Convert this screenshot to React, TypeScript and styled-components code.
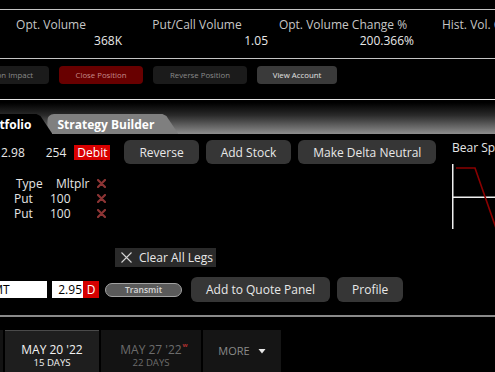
import React from 'react';
import styled, { createGlobalStyle } from 'styled-components';

const GlobalStyle = createGlobalStyle`
  html, body {
    margin: 0;
    padding: 0;
    background: #000;
  }
  body {
    font-family: 'Open Sans', 'DejaVu Sans', sans-serif;
    color: #e6e6e6;
    overflow: hidden;
  }
`;

const Screen = styled.div`
  width: 495px;
  height: 372px;
  overflow: hidden;
  background: #000;
  display: flex;
  flex-direction: column;

  & > * {
    flex-shrink: 0;
  }
`;

const Rule = styled.div<{ $color: string; $top: number; $size?: number }>`
  height: ${(p) => p.$size || 1}px;
  margin-top: ${(p) => p.$top}px;
  background: ${(p) => p.$color};
`;

/* ---------- stats strip ---------- */

const Stats = styled.div`
  display: grid;
  grid-template-columns: repeat(4, 146px);
  margin-left: -22px;
  padding-top: 7px;
  font-size: 12px;
  line-height: 15px;
  white-space: nowrap;
`;

const Stat = styled.div`
  display: flex;
  flex-direction: column;
  gap: 1px;
`;

const StatLabel = styled.div`
  text-align: center;
  color: #c6c6c6;
`;

const StatValue = styled.div`
  text-align: right;
  padding-right: 2px;
  color: #e8e8e8;
`;

/* ---------- small action buttons ---------- */

const ActionBar = styled.div`
  display: flex;
  gap: 10px;
  margin-top: 7px;
  margin-left: -39px;
`;

const SmallButton = styled.div<{ $w: number; $variant: 'dim' | 'danger' | 'normal' }>`
  flex-shrink: 0;
  width: ${(p) => p.$w}px;
  height: 18px;
  border-radius: 4px;
  display: flex;
  align-items: center;
  justify-content: center;
  font-size: 7.8px;
  white-space: nowrap;
  background: ${(p) => (p.$variant === 'danger' ? '#680000' : p.$variant === 'normal' ? '#3a3a3a' : '#1b1b1b')};
  color: ${(p) => (p.$variant === 'danger' ? '#c58a8a' : p.$variant === 'normal' ? '#e2e2e2' : '#8a8a8a')};
`;

/* ---------- tabs ---------- */

const TabBar = styled.div`
  height: 34px;
  display: flex;
  align-items: flex-end;
  background: linear-gradient(to bottom, #000 8%, #2a2a2a 45%, #8e8e8e 100%);
  overflow: hidden;
`;

const TabTrack = styled.div`
  display: flex;
  margin-left: -40px;
`;

const Tab = styled.div<{ $active?: boolean }>`
  position: relative;
  z-index: ${(p) => (p.$active ? 2 : 1)};
  height: 20px;
  line-height: 21px;
  padding: ${(p) => (p.$active ? '0 21px 0 19px' : '0 24px 0 10px')};
  margin-left: ${(p) => (p.$active ? 0 : -5)}px;
  background: ${(p) => (p.$active ? '#000' : '#7f7f7f')};
  border-top-left-radius: 7px;
  clip-path: polygon(0 0, calc(100% - 16px) 0, calc(100% - 12px) 2px, 100% 100%, 0 100%);
  color: #fff;
  font-weight: 700;
  font-size: 12px;
  white-space: nowrap;
`;

/* ---------- main builder area ---------- */

const Builder = styled.div`
  display: grid;
  grid-template-columns: 452px 1fr;
`;

const LeftPanel = styled.div`
  display: flex;
  flex-direction: column;
`;

const SummaryRow = styled.div`
  display: flex;
  align-items: center;
  height: 24px;
  margin-top: 6px;
  font-size: 12px;
  white-space: nowrap;
`;

const Figure = styled.span<{ $gap?: number }>`
  margin-left: ${(p) => p.$gap || 0}px;
  color: #e8e8e8;
`;

const DebitTag = styled.span`
  margin-left: 8px;
  height: 15px;
  line-height: 15px;
  padding: 0 3px;
  background: #d90000;
  color: #fff;
`;

const ButtonGroup = styled.div<{ $gap: number }>`
  display: flex;
  gap: 7px;
  margin-left: ${(p) => p.$gap}px;
`;

const Button = styled.div<{ $h?: number }>`
  height: ${(p) => p.$h || 24}px;
  padding: 0 15px;
  display: flex;
  align-items: center;
  border-radius: 6px;
  background: #363636;
  color: #e8e8e8;
  font-size: 12px;
  white-space: nowrap;
`;

const LegsTable = styled.div`
  display: grid;
  grid-template-columns: 14px 36px 47px 12px;
  grid-auto-rows: 15px;
  margin-top: 12px;
  font-size: 12px;
  line-height: 15px;
  color: #e6e6e6;
  white-space: nowrap;
`;

const Cell = styled.div<{ $indent?: number }>`
  padding-left: ${(p) => p.$indent || 0}px;
  display: flex;
  align-items: center;
`;

const ClearButton = styled.div`
  align-self: flex-start;
  margin-top: 27px;
  margin-left: 115px;
  height: 19px;
  display: flex;
  align-items: center;
  gap: 7px;
  padding: 0 3px 0 6px;
  background: #2a2a2a;
  color: #e8e8e8;
  font-size: 12px;
  white-space: nowrap;
`;

const OrderRow = styled.div`
  display: flex;
  align-items: center;
  height: 25px;
  margin-top: 10px;
  margin-left: -40px;
  white-space: nowrap;
`;

const Field = styled.div<{ $w: number; $align?: 'left' | 'right' }>`
  width: ${(p) => p.$w}px;
  height: 17px;
  box-sizing: border-box;
  padding: ${(p) => (p.$align === 'right' ? '0 1px 0 0' : '0 0 0 26px')};
  background: #fff;
  color: #000;
  font-size: 12px;
  line-height: 17px;
  text-align: ${(p) => p.$align || 'left'};
`;

const PriceGroup = styled.div`
  display: flex;
  margin-left: 5px;
`;

const SideFlag = styled.div`
  width: 16px;
  height: 17px;
  line-height: 17px;
  text-align: center;
  background: #d40000;
  color: #fff;
  font-size: 12px;
`;

const TransmitPill = styled.div`
  margin-left: 6px;
  width: 77px;
  height: 14px;
  box-sizing: border-box;
  border: 1.5px solid #a2a2a2;
  border-radius: 8px;
  background: #5a5a5a;
  color: #d8d8d8;
  font-size: 8.6px;
  font-weight: 600;
  display: flex;
  align-items: center;
  justify-content: center;
`;

const OrderButtons = styled.div`
  display: flex;
  gap: 7px;
  margin-left: 9px;
`;

/* ---------- chart ---------- */

const ChartPanel = styled.div`
  display: flex;
  flex-direction: column;
  white-space: nowrap;
`;

const ChartTitle = styled.div`
  margin-top: 6px;
  font-size: 12px;
  line-height: 16px;
  color: #e6e6e6;
`;

const ChartBox = styled.svg`
  margin-top: 8px;
  overflow: visible;
`;

/* ---------- expiry tabs ---------- */

const ExpiryBar = styled.div`
  display: flex;
  gap: 2px;
  margin-top: 13px;
  margin-left: -91px;
`;

const ExpiryTab = styled.div<{ $active?: boolean; $w: number }>`
  flex-shrink: 0;
  width: ${(p) => p.$w}px;
  height: 50px;
  box-sizing: border-box;
  padding-top: 12px;
  display: flex;
  flex-direction: column;
  align-items: center;
  background: ${(p) => (p.$active ? '#1e1e1e' : '#131313')};
  border-top: 1px solid ${(p) => (p.$active ? '#4a4a4a' : '#131313')};
  color: ${(p) => (p.$active ? '#f2f2f2' : '#6c6c6c')};
  white-space: nowrap;
`;

const ExpiryDate = styled.div`
  position: relative;
  font-size: 12px;
  line-height: 14px;
`;

const Weekly = styled.span`
  position: absolute;
  top: -1px;
  right: -6px;
  font-size: 6px;
  line-height: 6px;
  font-weight: 700;
  color: #b03030;
`;

const ExpiryDays = styled.div`
  font-size: 9.6px;
  line-height: 11px;
`;

const MoreTab = styled.div`
  flex-shrink: 0;
  width: 78px;
  height: 50px;
  box-sizing: border-box;
  padding-top: 14px;
  display: flex;
  justify-content: center;
  gap: 8px;
  background: #151515;
  color: #8a8a8a;
  font-size: 11px;
  line-height: 14px;
`;

const RemoveMark = () => (
  <svg width="9" height="9" viewBox="0 0 9 9">
    <path d="M1 1 L8 8 M8 1 L1 8" stroke="#8c3434" strokeWidth="2.2" strokeLinecap="round" />
  </svg>
);

const legs = [
  { type: 'Put', mult: '100' },
  { type: 'Put', mult: '100' },
];

export default function App() {
  return (
    <Screen>
      <GlobalStyle />
      <Rule $color="#c4c4c4" $top={9} />
      <Stats>
        <Stat>
          <StatLabel>Opt. Volume</StatLabel>
          <StatValue>368K</StatValue>
        </Stat>
        <Stat>
          <StatLabel>Put/Call Volume</StatLabel>
          <StatValue>1.05</StatValue>
        </Stat>
        <Stat>
          <StatLabel>Opt. Volume Change %</StatLabel>
          <StatValue>200.366%</StatValue>
        </Stat>
        <Stat>
          <StatLabel>Hist. Vol. Change</StatLabel>
          <StatValue>&nbsp;</StatValue>
        </Stat>
      </Stats>
      <Rule $color="#c4c4c4" $top={10} />

      <ActionBar>
        <SmallButton $w={88} $variant="dim">Position Impact</SmallButton>
        <SmallButton $w={84} $variant="danger">Close Position</SmallButton>
        <SmallButton $w={94} $variant="dim">Reverse Position</SmallButton>
        <SmallButton $w={80} $variant="normal">View Account</SmallButton>
      </ActionBar>

      <Rule $color="#e4e4e4" $top={15} />
      <TabBar>
        <TabTrack>
          <Tab $active>Portfolio</Tab>
          <Tab>Strategy Builder</Tab>
        </TabTrack>
      </TabBar>

      <Builder>
        <LeftPanel>
          <SummaryRow>
            <Figure $gap={1}>2.98</Figure>
            <Figure $gap={21}>254</Figure>
            <DebitTag>Debit</DebitTag>
            <ButtonGroup $gap={14}>
              <Button>Reverse</Button>
              <Button>Add Stock</Button>
              <Button>Make Delta Neutral</Button>
            </ButtonGroup>
          </SummaryRow>

          <LegsTable>
            <Cell />
            <Cell $indent={2}>Type</Cell>
            <Cell $indent={6}>Mltplr</Cell>
            <Cell><RemoveMark /></Cell>
            {legs.map((leg, i) => (
              <React.Fragment key={i}>
                <Cell />
                <Cell>{leg.type}</Cell>
                <Cell>{leg.mult}</Cell>
                <Cell><RemoveMark /></Cell>
              </React.Fragment>
            ))}
          </LegsTable>

          <ClearButton>
            <svg width="11" height="11" viewBox="0 0 11 11">
              <path d="M0.5 0.5 L10.5 10.5 M10.5 0.5 L0.5 10.5" stroke="#d6d6d6" strokeWidth="1.1" />
            </svg>
            Clear All Legs
          </ClearButton>

          <OrderRow>
            <Field $w={87}>LMT</Field>
            <PriceGroup>
              <Field $w={31} $align="right">2.95</Field>
              <SideFlag>D</SideFlag>
            </PriceGroup>
            <TransmitPill>Transmit</TransmitPill>
            <OrderButtons>
              <Button $h={25}>Add to Quote Panel</Button>
              <Button $h={25}>Profile</Button>
            </OrderButtons>
          </OrderRow>
        </LeftPanel>

        <ChartPanel>
          <ChartTitle>Bear Spread</ChartTitle>
          <ChartBox width="43" height="66" viewBox="0 0 43 66">
            <path d="M0.75 0 V65" stroke="#f0f0f0" strokeWidth="1.5" />
            <path d="M0 33.25 H60" stroke="#f0f0f0" strokeWidth="1.5" />
            <path d="M4 4 H23 L45 67" stroke="#8a0000" strokeWidth="1.6" fill="none" />
          </ChartBox>
        </ChartPanel>
      </Builder>

      <Rule $color="#8a8a8a" $top={13} $size={2} />

      <ExpiryBar>
        <ExpiryTab $w={94}>
          <ExpiryDate>MAY 13 '22</ExpiryDate>
          <ExpiryDays>8 DAYS</ExpiryDays>
        </ExpiryTab>
        <ExpiryTab $w={94} $active>
          <ExpiryDate>MAY 20 '22</ExpiryDate>
          <ExpiryDays>15 DAYS</ExpiryDays>
        </ExpiryTab>
        <ExpiryTab $w={100}>
          <ExpiryDate>
            MAY 27 '22<Weekly>w</Weekly>
          </ExpiryDate>
          <ExpiryDays>22 DAYS</ExpiryDays>
        </ExpiryTab>
        <MoreTab>
          MORE
          <svg width="8" height="14" viewBox="0 0 8 14">
            <path d="M0.5 5 H7.5 L4 9.5 Z" fill="#e8e8e8" />
          </svg>
        </MoreTab>
      </ExpiryBar>
    </Screen>
  );
}
